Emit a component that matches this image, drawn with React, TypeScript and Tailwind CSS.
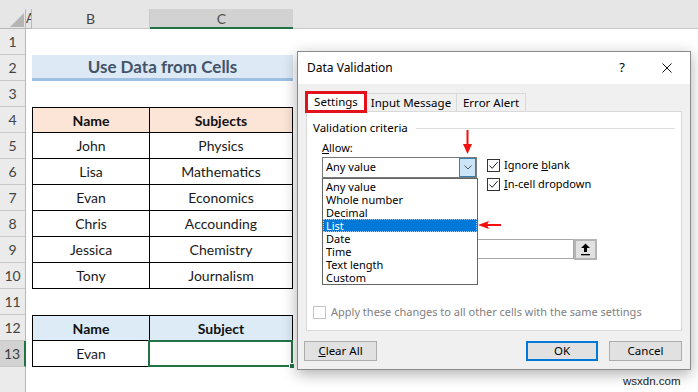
import React from "react";

type Row = { n: number; kind: string; b?: string; c?: string };

const rows: Row[] = [
  { n: 1, kind: "empty" },
  { n: 2, kind: "title" },
  { n: 3, kind: "empty" },
  { n: 4, kind: "head1", b: "Name", c: "Subjects" },
  { n: 5, kind: "data", b: "John", c: "Physics" },
  { n: 6, kind: "data", b: "Lisa", c: "Mathematics" },
  { n: 7, kind: "data", b: "Evan", c: "Economics" },
  { n: 8, kind: "data", b: "Chris", c: "Accounding" },
  { n: 9, kind: "data", b: "Jessica", c: "Chemistry" },
  { n: 10, kind: "data", b: "Tony", c: "Journalism" },
  { n: 11, kind: "empty" },
  { n: 12, kind: "head2", b: "Name", c: "Subject" },
  { n: 13, kind: "sel", b: "Evan", c: "" },
];

function Check({ checked = true, disabled = false }: { checked?: boolean; disabled?: boolean }) {
  return (
    <span
      className={
        "w-[13px] h-[13px] shrink-0 border bg-white flex items-center justify-center " +
        (disabled ? "border-[#c4c4c4]" : "border-[#333333]")
      }
    >
      {checked && (
        <svg width="11" height="11" viewBox="0 0 11 11">
          <path d="M1.5 5.5 L4.2 8.3 L9.5 2.2" fill="none" stroke="#222" strokeWidth="1" />
        </svg>
      )}
    </span>
  );
}

function SheetRow({ r }: { r: Row }) {
  const sel = r.kind === "sel";
  return (
    <div className="flex h-[26px]">
      <div
        className={
          "w-[26px] shrink-0 border-b border-[#c8c8c8] flex items-center justify-center text-[14px] " +
          (sel
            ? "bg-[#d2d2d2] border-r-2 border-r-[#217346] text-[#3b3b3b]"
            : "bg-[#ebebeb] border-r border-r-[#b8b8b8] text-[#444444]")
        }
      >
        {r.n}
      </div>
      <div className="w-[6px] shrink-0" />
      {r.kind === "empty" && <div className="w-[261px]" />}
      {r.kind === "title" && (
        <div className="w-[261px] bg-[#dde9f5] border-b-[3px] border-[#9dc0e2] flex items-center justify-center font-bold text-[17px] text-[#44546a]">
          Use Data from Cells
        </div>
      )}
      {(r.kind === "head1" || r.kind === "head2") && (
        <>
          <div
            className={
              "w-[118px] border border-black flex items-center justify-center font-bold text-[14px] text-[#111] " +
              (r.kind === "head1" ? "bg-[#fce4d6]" : "bg-[#ddebf7]")
            }
          >
            {r.b}
          </div>
          <div
            className={
              "w-[143px] border-t border-b border-r border-black flex items-center justify-center font-bold text-[14px] text-[#111] " +
              (r.kind === "head1" ? "bg-[#fce4d6]" : "bg-[#ddebf7]")
            }
          >
            {r.c}
          </div>
        </>
      )}
      {(r.kind === "data" || r.kind === "sel") && (
        <>
          <div className="w-[118px] border-l border-r border-b border-black flex items-center justify-center text-[14px] text-[#1a1a1a]">
            {r.b}
          </div>
          <div className="relative w-[143px] border-r border-b border-black flex items-center justify-center text-[14px] text-[#1a1a1a]">
            {r.c}
            {sel && (
              <>
                <div className="absolute -left-[2px] -top-[1px] -right-px -bottom-px border-2 border-[#217346]" />
                <div className="absolute -right-[3px] -bottom-[3px] w-[6px] h-[6px] bg-[#217346] border border-white" />
              </>
            )}
          </div>
        </>
      )}
    </div>
  );
}

const items = ["Any value", "Whole number", "Decimal", "List", "Date", "Time", "Text length", "Custom"];

export default function App() {
  return (
    <div className="relative w-[698px] h-[392px] overflow-hidden bg-white font-[Lato]">
      {/* top strip */}
      <div className="h-[9px] bg-[#e6e6e6]" />
      {/* column header */}
      <div className="flex h-[20px] bg-[#e6e6e6] text-[14px] text-[#444444]">
        <div className="relative w-[26px] shrink-0 border-r border-b border-[#b8b8b8]">
          <svg className="absolute left-[10px] top-[4px]" width="14" height="14" viewBox="0 0 14 14">
            <polygon points="14,0 14,14 0,14" fill="#b5b5b5" />
          </svg>
        </div>
        <div className="w-[6px] shrink-0 border-r border-b border-[#b8b8b8] overflow-hidden flex items-center text-[13px] leading-none">
          A
        </div>
        <div className="w-[118px] shrink-0 border-r border-b border-[#c8c8c8] flex items-center justify-center">B</div>
        <div className="w-[143px] shrink-0 bg-[#d2d2d2] border-b-2 border-[#217346] flex items-center justify-center text-[#505050]">
          C
        </div>
        <div className="flex-1 border-b border-[#c8c8c8]" />
      </div>
      {rows.map((r) => (
        <SheetRow key={r.n} r={r} />
      ))}
      <div className="flex h-[30px]">
        <div className="w-[26px] bg-[#ebebeb] border-r border-[#b8b8b8]" />
      </div>

      {/* Dialog */}
      <div className="absolute left-[297px] top-[51px] w-[394px] h-[319px] bg-[#f0f0f0] border border-[#8a8a8a] shadow-[0_4px_14px_rgba(0,0,0,0.32)] flex flex-col font-['Noto_Sans',sans-serif] text-[11px] text-black">
        {/* title bar */}
        <div className="h-[32px] shrink-0 bg-white flex items-center pl-[9px] pr-[18px]">
          <span className="text-[12px]">Data Validation</span>
          <span className="ml-auto text-[13px]">?</span>
          <svg className="ml-[37px]" width="10" height="10" viewBox="0 0 10 10">
            <path d="M0.5 0.5 L9.5 9.5 M9.5 0.5 L0.5 9.5" stroke="#111" strokeWidth="1" />
          </svg>
        </div>
        {/* tabs */}
        <div className="mt-[7px] h-[20px] flex items-end pl-[8px] relative z-10 text-[11.5px]">
          <div className="relative w-[60px] h-[21px] -mb-px bg-white border-t border-l border-r border-[#d9d9d9] flex items-center justify-center">
            Settings
            <div className="absolute -left-[2px] -top-[1px] -right-[2px] -bottom-px border-[3px] border-[#e3111a]" />
          </div>
          <div className="w-[91px] h-[18px] bg-[#f0f0f0] border-t border-r border-[#d9d9d9] flex items-center justify-center">
            Input Message
          </div>
          <div className="w-[69px] h-[18px] bg-[#f0f0f0] border-t border-r border-[#d9d9d9] flex items-center justify-center">
            Error Alert
          </div>
        </div>
        {/* pane */}
        <div className="relative mx-[8px] h-[220px] shrink-0 bg-white border border-[#d9d9d9] flex flex-col pt-[8px]">
          <div className="flex items-center h-[16px] pl-[6px] pr-[6px] text-[11.5px]">
            <span>Validation criteria</span>
            <div className="flex-1 ml-[8px] h-px bg-[#dcdcdc]" />
          </div>
          <div className="mt-[4px] h-[16px] pl-[15px] flex items-center">
            <span>
              <span className="underline">A</span>llow:
            </span>
          </div>
          <div className="mt-px pl-[15px] flex h-[35px]">
            <div className="w-[155px] h-[21px] border border-[#7a7a7a] bg-white flex items-center">
              <span className="pl-[3px] flex-1">Any value</span>
              <div className="w-[17px] h-[19px] bg-[#cce4f7] border border-[#3c7fb1] flex items-center justify-center">
                <svg width="8" height="5" viewBox="0 0 8 5">
                  <path d="M0.5 0.5 L4 4 L7.5 0.5" fill="none" stroke="#555" strokeWidth="1" />
                </svg>
              </div>
            </div>
            <div className="ml-[10px] flex flex-col gap-[3px]">
              <div className="h-[16px] flex items-center gap-[4px]">
                <Check />
                <span>
                  Ignore <span className="underline">b</span>lank
                </span>
              </div>
              <div className="h-[16px] flex items-center gap-[4px]">
                <Check />
                <span>
                  <span className="underline">I</span>n-cell dropdown
                </span>
              </div>
            </div>
          </div>
          <div className="mt-[47px] pl-[15px] flex h-[20px]">
            <div className="w-[252px] h-[20px] border border-[#a8a8a8] bg-white" />
            <div className="w-[23px] h-[21px] bg-[#e1e1e1] border-2 border-[#b4b4b4] flex items-center justify-center">
              <svg width="11" height="13" viewBox="0 0 11 13">
                <path d="M5.5 0.5 L1 5 H4 V9 H7 V5 H10 Z" fill="#000" />
                <rect x="1" y="11" width="9" height="1.3" fill="#000" />
              </svg>
            </div>
          </div>
          <div className="mt-[45px] h-[16px] pl-[6px] flex items-center gap-[5px] text-[#808080]">
            <Check checked={false} disabled />
            <span>Apply these changes to all other cells with the same settings</span>
          </div>

          {/* dropdown list */}
          <div className="absolute left-[15px] top-[66px] w-[156px] h-[107px] bg-white border border-[#646464] pt-px flex flex-col">
            {items.map((it) => (
              <div
                key={it}
                className={
                  "h-[13px] leading-[13px] pl-[3px] " +
                  (it === "List" ? "bg-[#0078d7] text-white outline-1 outline-dotted outline-[#9fd0f7] -outline-offset-1" : "")
                }
              >
                {it}
              </div>
            ))}
          </div>

          {/* red arrows */}
          <svg className="absolute left-[156px] top-[18px]" width="9" height="24" viewBox="0 0 9 24">
            <rect x="3.5" y="0" width="2" height="15" fill="#f01010" />
            <polygon points="0,14 9,14 4.5,24" fill="#f01010" />
          </svg>
          <svg className="absolute left-[171px] top-[108px]" width="23" height="10" viewBox="0 0 23 10">
            <polygon points="0,5 11,1 9,5 11,9" fill="#f01010" />
            <rect x="9" y="4" width="14" height="2" fill="#f01010" />
          </svg>
        </div>
        {/* buttons */}
        <div className="mt-[10px] flex h-[20px] pl-[6px] pr-[8px] text-[11.5px]">
          <div className="w-[73px] h-[20px] bg-[#e1e1e1] border border-[#adadad] flex items-center justify-center">
            <span>
              <span className="underline">C</span>lear All
            </span>
          </div>
          <div className="ml-auto w-[72px] h-[20px] bg-[#e1e1e1] border-2 border-[#0078d7] flex items-center justify-center">
            OK
          </div>
          <div className="ml-[11px] w-[73px] h-[20px] bg-[#e1e1e1] border border-[#adadad] flex items-center justify-center">
            Cancel
          </div>
        </div>
      </div>

      {/* watermark */}
      <div className="absolute left-[623px] top-[373px] font-['Liberation_Sans',sans-serif] text-[11.5px] text-[#222]">
        wsxdn.com
      </div>
    </div>
  );
}
